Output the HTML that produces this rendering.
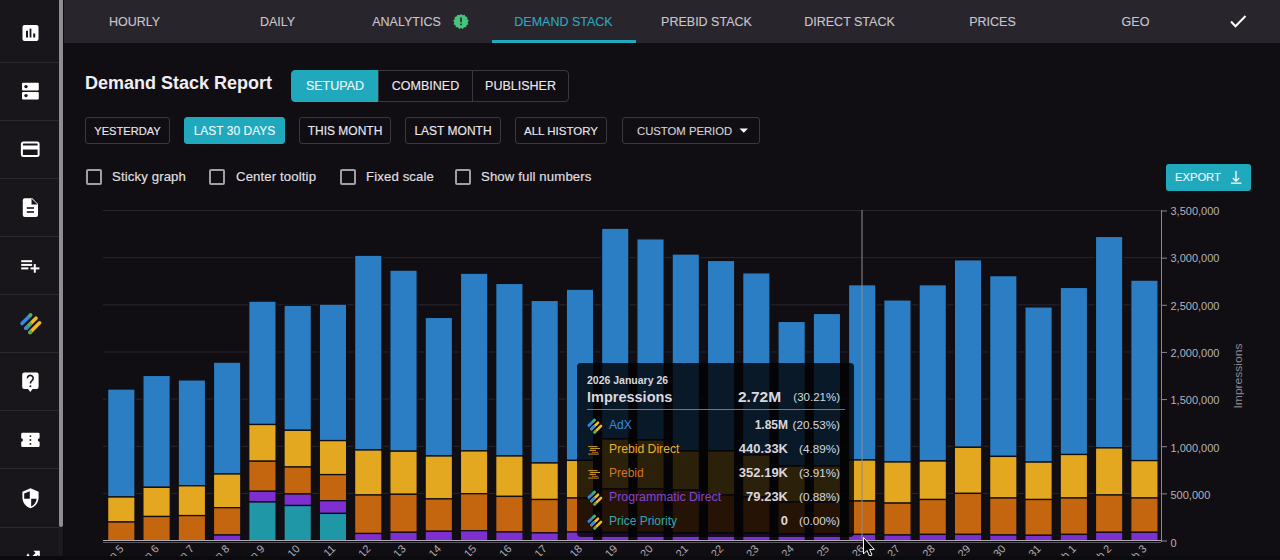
<!DOCTYPE html>
<html><head><meta charset="utf-8">
<style>
*{box-sizing:border-box;margin:0;padding:0}
html,body{width:1280px;height:560px;overflow:hidden;background:#100e13;font-family:"Liberation Sans",sans-serif;color:#e9e6ec}
.abs{position:absolute}
.tab,.grp,.btn,.cbl,#export{-webkit-text-stroke:0.12px currentColor}
#side{left:0;top:0;width:59px;height:560px;background:#19161b}
.sep{position:absolute;left:0;width:59px;height:1px;background:#2b2830}
#sbtrack{left:59px;top:0;width:4px;height:560px;background:#1c1a1f}
#sbthumb{left:59px;top:0;width:4px;height:527px;background:#8f8c93;border-radius:0 0 2px 2px}
#nav{left:64px;top:0;width:1216px;height:43px;background:#29252c}
.tab{position:absolute;top:1px;height:43px;width:143px;text-align:center;font-size:12.5px;line-height:43px;color:#c9c5cc;white-space:nowrap}
.tab.act{color:#2aa8c0}
#uline{left:492px;top:40px;width:144px;height:3px;background:#22a9bd}
#title{left:85px;top:72px;font-size:18px;font-weight:700;color:#f1eef3;white-space:nowrap;line-height:22px}
.grp{position:absolute;top:70px;height:32px;border:1px solid #3a3740;font-size:12.5px;color:#ece9ef;line-height:30px;text-align:center;white-space:nowrap}
.btn{position:absolute;top:117px;height:27px;border:1px solid #3a3740;border-radius:3px;font-size:12px;color:#ece9ef;line-height:26px;text-align:center;white-space:nowrap}
.btn.on{background:#20a9bd;border-color:#20a9bd;color:#eef8fa}
.cb{position:absolute;top:169px;width:16px;height:16px;border:2px solid #a29ea6;border-radius:2px}
.cbl{position:absolute;top:169px;font-size:13.2px;letter-spacing:0.12px;line-height:16px;color:#e3e0e6;white-space:nowrap}
#export{left:1166px;top:164px;width:85px;height:27px;background:#20a9bd;border-radius:3px;font-size:11.2px;color:#eef8fa;line-height:27px;padding-left:9px;white-space:nowrap}
svg{position:absolute;left:0;top:0}
#tip{left:577px;top:363px;width:277px;height:174px;background:rgba(3,3,5,0.82);border-radius:4px}
.tt{position:absolute;white-space:nowrap;color:#dad7dd}
</style></head><body>
<div id="side" class="abs">
  <div class="sep" style="top:62px"></div>
  <div class="sep" style="top:120px"></div>
  <div class="sep" style="top:178px"></div>
  <div class="sep" style="top:236px"></div>
  <div class="sep" style="top:294px"></div>
  <div class="sep" style="top:352px"></div>
  <div class="sep" style="top:410px"></div>
  <div class="sep" style="top:468px"></div>
  <div class="sep" style="top:527px"></div>
</div>
<div id="sbtrack" class="abs"></div>
<div id="sbthumb" class="abs"></div>
<div class="abs" style="left:63px;top:0;width:1px;height:560px;background:#0d0b0f"></div>

<svg width="64" height="560" viewBox="0 0 64 560">
  <!-- icon1 chart -->
  <rect x="22.5" y="25" width="16" height="16" rx="2" fill="#fff"/>
  <rect x="26" y="30.8" width="2" height="6.7" fill="#19161b"/>
  <rect x="29.6" y="28.6" width="1.8" height="8.9" fill="#19161b"/>
  <rect x="33.2" y="33.5" width="2" height="4" fill="#19161b"/>
  <!-- icon2 storage -->
  <rect x="22" y="82.8" width="16.8" height="7.7" rx="1" fill="#fff"/>
  <rect x="22" y="91.9" width="16.8" height="7.5" rx="1" fill="#fff"/>
  <circle cx="26" cy="86.6" r="1.7" fill="#19161b"/>
  <circle cx="26" cy="95.6" r="1.7" fill="#19161b"/>
  <!-- icon3 card -->
  <rect x="21.9" y="142.5" width="16.7" height="13.5" rx="1.5" fill="none" stroke="#fff" stroke-width="2"/>
  <rect x="21.9" y="145.5" width="16.7" height="4" fill="#fff"/>
  <!-- icon4 doc -->
  <path d="M24.8 198.2 H32.3 L38 203.9 V215 a1.9 1.9 0 0 1 -1.9 1.9 H24.8 a2 2 0 0 1 -2 -2 V200.2 a2 2 0 0 1 2 -2z" fill="#fff"/>
  <path d="M31.5 198.5 V204.5 H37.6" fill="#19161b"/>
  <rect x="26.8" y="207.2" width="7.2" height="1.6" fill="#19161b"/>
  <rect x="26.8" y="211.2" width="7.2" height="1.6" fill="#19161b"/>
  <!-- icon5 playlist add -->
  <rect x="21.2" y="260.2" width="10.9" height="2" fill="#fff"/>
  <rect x="21.2" y="263.9" width="10.9" height="2" fill="#fff"/>
  <rect x="21.2" y="267.4" width="7.2" height="2" fill="#fff"/>
  <rect x="30.5" y="267.4" width="8.9" height="2" fill="#fff"/>
  <rect x="33.8" y="264.1" width="2" height="8.6" fill="#fff"/>
  <!-- icon6 logo -->
  <g stroke-linecap="round" stroke-width="3.6" fill="none">
    <line x1="22" y1="323.6" x2="30.6" y2="315" stroke="#3b86e0"/>
    <line x1="30" y1="315.6" x2="30.6" y2="315" stroke="#3fb555"/>
    <line x1="26" y1="328.2" x2="36" y2="318.2" stroke="#f6b81e"/>
    <line x1="26" y1="328.2" x2="29" y2="325.2" stroke="#3b86e0"/>
    <line x1="29.2" y1="325" x2="30.2" y2="324" stroke="#3fb555"/>
    <line x1="30" y1="332.4" x2="39.6" y2="322.8" stroke="#f6b81e"/>
    <line x1="30" y1="332.4" x2="30.6" y2="331.8" stroke="#3fb555"/>
  </g>
  <!-- icon7 help bubble -->
  <path d="M24.2 372.6 H36.6 a2 2 0 0 1 2 2 V387 a2 2 0 0 1 -2 2 H32.6 L30.3 391.9 L28 389 H24.2 a2 2 0 0 1 -2 -2 V374.6 a2 2 0 0 1 2 -2z" fill="#fff"/>
  <path d="M27.4 378.2 a2.9 2.9 0 1 1 4.6 2.4 c-1.2 0.9 -1.6 1.5 -1.6 2.9" fill="none" stroke="#19161b" stroke-width="1.6"/>
  <circle cx="30.4" cy="386.3" r="1" fill="#19161b"/>
  <!-- icon8 ticket -->
  <path d="M22.5 432.8 H38.3 a1.3 1.3 0 0 1 1.3 1.3 V438.2 a1.8 1.8 0 0 0 0 3.6 V445.7 a1.3 1.3 0 0 1 -1.3 1.3 H22.5 a1.3 1.3 0 0 1 -1.3 -1.3 V441.8 a1.8 1.8 0 0 0 0 -3.6 V434.1 a1.3 1.3 0 0 1 1.3 -1.3z" fill="#fff"/>
  <circle cx="30.4" cy="436.1" r="0.95" fill="#19161b"/>
  <circle cx="30.4" cy="440" r="0.95" fill="#19161b"/>
  <circle cx="30.4" cy="443.9" r="0.95" fill="#19161b"/>
  <!-- icon9 shield -->
  <path d="M30.5 488.3 L38.6 491.8 V497.5 c0 5 -3.4 9.5 -8.1 10.7 c-4.7 -1.2 -8.1 -5.7 -8.1 -10.7 V491.8z" fill="#fff"/>
  <path d="M29.8 491.2 V498.8 H24.2 V493.4z" fill="#19161b"/>
  <path d="M31.2 498.8 H36.7 c-0.5 3.6 -2.5 6.5 -5.5 7.6z" fill="#19161b"/>
  <!-- expand icon partial -->
  <path d="M33.4 550.7 H39.8 V557.1 L37.7 555 L34.6 558.1 L32.5 556 L35.6 552.9z" fill="#fff"/>
  <path d="M25.6 557.2 L28 553.2 L30.4 557.2z" fill="#fff"/>
</svg>

<div id="nav" class="abs"></div>
<div class="tab" style="left:63px">HOURLY</div>
<div class="tab" style="left:206px">DAILY</div>
<div class="tab" style="left:349px;padding-right:28px;padding-left:0px">ANALYTICS</div>
<div class="tab act" style="left:492px">DEMAND STACK</div>
<div class="tab" style="left:635px">PREBID STACK</div>
<div class="tab" style="left:778px">DIRECT STACK</div>
<div class="tab" style="left:921px">PRICES</div>
<div class="tab" style="left:1064px">GEO</div>
<div id="uline" class="abs"></div>
<svg width="1280" height="43" viewBox="0 0 1280 43" style="left:0;top:0">
  <path d="M461 14 l1.6 1.3 2-0.6 0.8 1.9 2 0.5 -0.2 2.1 1.6 1.3 -1.1 1.8 0.7 2 -1.9 0.9 -0.3 2.1 -2.1 0 -1.2 1.7 -1.9 -1 -1.9 1 -1.2 -1.7 -2.1 0 -0.3 -2.1 -1.9 -0.9 0.7 -2 -1.1 -1.8 1.6 -1.3 -0.2 -2.1 2 -0.5 0.8 -1.9 2 0.6z" fill="#46c37d"/>
  <rect x="460.2" y="17.5" width="1.6" height="4.8" fill="#29252c"/>
  <rect x="460.2" y="23.6" width="1.6" height="1.6" fill="#29252c"/>
  <path d="M1231 21.5 L1235.5 26.3 L1245.5 16" stroke="#fff" stroke-width="2" fill="none"/>
</svg>

<div id="title" class="abs">Demand Stack Report</div>
<div class="grp" style="left:291px;width:88px;border-radius:4px 0 0 4px;background:#20a9bd;border-color:#20a9bd;color:#eef8fa">SETUPAD</div>
<div class="grp" style="left:378px;width:95px;border-left:1px solid #3a3740">COMBINED</div>
<div class="grp" style="left:472px;width:97px;border-radius:0 4px 4px 0">PUBLISHER</div>

<div class="btn" style="left:85px;width:85px;font-size:11.1px">YESTERDAY</div>
<div class="btn on" style="left:184px;width:101px">LAST 30 DAYS</div>
<div class="btn" style="left:299px;width:92px">THIS MONTH</div>
<div class="btn" style="left:405px;width:96px">LAST MONTH</div>
<div class="btn" style="left:515px;width:92px;font-size:11.5px">ALL HISTORY</div>
<div class="btn" style="left:622px;width:138px;text-align:left;padding-left:14px;color:#d6d3d9;font-size:11.3px">CUSTOM PERIOD</div>
<svg width="1280" height="160" style="left:0;top:0"><path d="M739.5 128.5 H748 L743.75 132.8z" fill="#fff"/></svg>

<div class="cb" style="left:86px"></div><div class="cbl" style="left:112px">Sticky graph</div>
<div class="cb" style="left:209px"></div><div class="cbl" style="left:236px">Center tooltip</div>
<div class="cb" style="left:340px"></div><div class="cbl" style="left:366px">Fixed scale</div>
<div class="cb" style="left:455px"></div><div class="cbl" style="left:481px">Show full numbers</div>
<div id="export" class="abs">EXPORT</div>
<svg width="1280" height="200" style="left:0;top:0">
  <path d="M1236 171 V181 M1232.8 178 L1236 181.2 L1239.2 178 M1231 183.2 H1241.4" stroke="#fff" stroke-width="1.3" fill="none"/>
</svg>

<svg width="1280" height="560" viewBox="0 0 1280 560" style="left:0;top:0">
<rect x="103" y="540.10" width="1058" height="1" fill="#29262e"/>
<rect x="103" y="492.94" width="1058" height="1" fill="#29262e"/>
<rect x="103" y="445.79" width="1058" height="1" fill="#29262e"/>
<rect x="103" y="398.63" width="1058" height="1" fill="#29262e"/>
<rect x="103" y="351.47" width="1058" height="1" fill="#29262e"/>
<rect x="103" y="304.32" width="1058" height="1" fill="#29262e"/>
<rect x="103" y="257.16" width="1058" height="1" fill="#29262e"/>
<rect x="103" y="210.00" width="1058" height="1" fill="#29262e"/>
<rect x="107.60" y="389.00" width="27.4" height="108.00" fill="#2b7ec3" stroke="#100e13" stroke-width="1.3"/>
<rect x="107.60" y="497.00" width="27.4" height="25.00" fill="#e3a81f" stroke="#100e13" stroke-width="1.3"/>
<rect x="107.60" y="522.00" width="27.4" height="19.00" fill="#c4650f" stroke="#100e13" stroke-width="1.3"/>
<rect x="142.88" y="375.40" width="27.4" height="111.90" fill="#2b7ec3" stroke="#100e13" stroke-width="1.3"/>
<rect x="142.88" y="487.30" width="27.4" height="29.20" fill="#e3a81f" stroke="#100e13" stroke-width="1.3"/>
<rect x="142.88" y="516.50" width="27.4" height="24.50" fill="#c4650f" stroke="#100e13" stroke-width="1.3"/>
<rect x="178.16" y="379.90" width="27.4" height="105.90" fill="#2b7ec3" stroke="#100e13" stroke-width="1.3"/>
<rect x="178.16" y="485.80" width="27.4" height="29.80" fill="#e3a81f" stroke="#100e13" stroke-width="1.3"/>
<rect x="178.16" y="515.60" width="27.4" height="25.40" fill="#c4650f" stroke="#100e13" stroke-width="1.3"/>
<rect x="213.44" y="362.10" width="27.4" height="111.90" fill="#2b7ec3" stroke="#100e13" stroke-width="1.3"/>
<rect x="213.44" y="474.00" width="27.4" height="33.70" fill="#e3a81f" stroke="#100e13" stroke-width="1.3"/>
<rect x="213.44" y="507.70" width="27.4" height="27.30" fill="#c4650f" stroke="#100e13" stroke-width="1.3"/>
<rect x="213.44" y="535.00" width="27.4" height="6.00" fill="#7d2fcf" stroke="#100e13" stroke-width="1.3"/>
<rect x="248.72" y="301.10" width="27.4" height="123.40" fill="#2b7ec3" stroke="#100e13" stroke-width="1.3"/>
<rect x="248.72" y="424.50" width="27.4" height="36.70" fill="#e3a81f" stroke="#100e13" stroke-width="1.3"/>
<rect x="248.72" y="461.20" width="27.4" height="30.10" fill="#c4650f" stroke="#100e13" stroke-width="1.3"/>
<rect x="248.72" y="491.30" width="27.4" height="10.70" fill="#7d2fcf" stroke="#100e13" stroke-width="1.3"/>
<rect x="248.72" y="502.00" width="27.4" height="39.00" fill="#2097a7" stroke="#100e13" stroke-width="1.3"/>
<rect x="284.00" y="305.30" width="27.4" height="125.00" fill="#2b7ec3" stroke="#100e13" stroke-width="1.3"/>
<rect x="284.00" y="430.30" width="27.4" height="36.70" fill="#e3a81f" stroke="#100e13" stroke-width="1.3"/>
<rect x="284.00" y="467.00" width="27.4" height="27.00" fill="#c4650f" stroke="#100e13" stroke-width="1.3"/>
<rect x="284.00" y="494.00" width="27.4" height="11.50" fill="#7d2fcf" stroke="#100e13" stroke-width="1.3"/>
<rect x="284.00" y="505.50" width="27.4" height="35.50" fill="#2097a7" stroke="#100e13" stroke-width="1.3"/>
<rect x="319.28" y="304.10" width="27.4" height="136.50" fill="#2b7ec3" stroke="#100e13" stroke-width="1.3"/>
<rect x="319.28" y="440.60" width="27.4" height="34.00" fill="#e3a81f" stroke="#100e13" stroke-width="1.3"/>
<rect x="319.28" y="474.60" width="27.4" height="26.10" fill="#c4650f" stroke="#100e13" stroke-width="1.3"/>
<rect x="319.28" y="500.70" width="27.4" height="12.70" fill="#7d2fcf" stroke="#100e13" stroke-width="1.3"/>
<rect x="319.28" y="513.40" width="27.4" height="27.60" fill="#2097a7" stroke="#100e13" stroke-width="1.3"/>
<rect x="354.56" y="255.20" width="27.4" height="194.80" fill="#2b7ec3" stroke="#100e13" stroke-width="1.3"/>
<rect x="354.56" y="450.00" width="27.4" height="45.00" fill="#e3a81f" stroke="#100e13" stroke-width="1.3"/>
<rect x="354.56" y="495.00" width="27.4" height="38.50" fill="#c4650f" stroke="#100e13" stroke-width="1.3"/>
<rect x="354.56" y="533.50" width="27.4" height="7.50" fill="#7d2fcf" stroke="#100e13" stroke-width="1.3"/>
<rect x="389.84" y="270.10" width="27.4" height="181.10" fill="#2b7ec3" stroke="#100e13" stroke-width="1.3"/>
<rect x="389.84" y="451.20" width="27.4" height="43.10" fill="#e3a81f" stroke="#100e13" stroke-width="1.3"/>
<rect x="389.84" y="494.30" width="27.4" height="38.00" fill="#c4650f" stroke="#100e13" stroke-width="1.3"/>
<rect x="389.84" y="532.30" width="27.4" height="8.70" fill="#7d2fcf" stroke="#100e13" stroke-width="1.3"/>
<rect x="425.12" y="317.40" width="27.4" height="138.60" fill="#2b7ec3" stroke="#100e13" stroke-width="1.3"/>
<rect x="425.12" y="456.00" width="27.4" height="42.90" fill="#e3a81f" stroke="#100e13" stroke-width="1.3"/>
<rect x="425.12" y="498.90" width="27.4" height="32.40" fill="#c4650f" stroke="#100e13" stroke-width="1.3"/>
<rect x="425.12" y="531.30" width="27.4" height="9.70" fill="#7d2fcf" stroke="#100e13" stroke-width="1.3"/>
<rect x="460.40" y="273.20" width="27.4" height="177.70" fill="#2b7ec3" stroke="#100e13" stroke-width="1.3"/>
<rect x="460.40" y="450.90" width="27.4" height="42.80" fill="#e3a81f" stroke="#100e13" stroke-width="1.3"/>
<rect x="460.40" y="493.70" width="27.4" height="37.00" fill="#c4650f" stroke="#100e13" stroke-width="1.3"/>
<rect x="460.40" y="530.70" width="27.4" height="10.30" fill="#7d2fcf" stroke="#100e13" stroke-width="1.3"/>
<rect x="495.68" y="283.40" width="27.4" height="172.60" fill="#2b7ec3" stroke="#100e13" stroke-width="1.3"/>
<rect x="495.68" y="456.00" width="27.4" height="40.40" fill="#e3a81f" stroke="#100e13" stroke-width="1.3"/>
<rect x="495.68" y="496.40" width="27.4" height="35.60" fill="#c4650f" stroke="#100e13" stroke-width="1.3"/>
<rect x="495.68" y="532.00" width="27.4" height="9.00" fill="#7d2fcf" stroke="#100e13" stroke-width="1.3"/>
<rect x="530.96" y="300.40" width="27.4" height="162.60" fill="#2b7ec3" stroke="#100e13" stroke-width="1.3"/>
<rect x="530.96" y="463.00" width="27.4" height="36.50" fill="#e3a81f" stroke="#100e13" stroke-width="1.3"/>
<rect x="530.96" y="499.50" width="27.4" height="33.40" fill="#c4650f" stroke="#100e13" stroke-width="1.3"/>
<rect x="530.96" y="532.90" width="27.4" height="8.10" fill="#7d2fcf" stroke="#100e13" stroke-width="1.3"/>
<rect x="566.24" y="289.20" width="27.4" height="171.20" fill="#2b7ec3" stroke="#100e13" stroke-width="1.3"/>
<rect x="566.24" y="460.40" width="27.4" height="37.60" fill="#e3a81f" stroke="#100e13" stroke-width="1.3"/>
<rect x="566.24" y="498.00" width="27.4" height="34.00" fill="#c4650f" stroke="#100e13" stroke-width="1.3"/>
<rect x="566.24" y="532.00" width="27.4" height="9.00" fill="#7d2fcf" stroke="#100e13" stroke-width="1.3"/>
<rect x="601.52" y="228.20" width="27.4" height="210.80" fill="#2b7ec3" stroke="#100e13" stroke-width="1.3"/>
<rect x="601.52" y="439.00" width="27.4" height="50.00" fill="#e3a81f" stroke="#100e13" stroke-width="1.3"/>
<rect x="601.52" y="489.00" width="27.4" height="43.50" fill="#c4650f" stroke="#100e13" stroke-width="1.3"/>
<rect x="601.52" y="532.50" width="27.4" height="8.50" fill="#7d2fcf" stroke="#100e13" stroke-width="1.3"/>
<rect x="636.80" y="238.80" width="27.4" height="201.20" fill="#2b7ec3" stroke="#100e13" stroke-width="1.3"/>
<rect x="636.80" y="440.00" width="27.4" height="49.00" fill="#e3a81f" stroke="#100e13" stroke-width="1.3"/>
<rect x="636.80" y="489.00" width="27.4" height="43.50" fill="#c4650f" stroke="#100e13" stroke-width="1.3"/>
<rect x="636.80" y="532.50" width="27.4" height="8.50" fill="#7d2fcf" stroke="#100e13" stroke-width="1.3"/>
<rect x="672.08" y="254.00" width="27.4" height="197.00" fill="#2b7ec3" stroke="#100e13" stroke-width="1.3"/>
<rect x="672.08" y="451.00" width="27.4" height="39.00" fill="#e3a81f" stroke="#100e13" stroke-width="1.3"/>
<rect x="672.08" y="490.00" width="27.4" height="43.00" fill="#c4650f" stroke="#100e13" stroke-width="1.3"/>
<rect x="672.08" y="533.00" width="27.4" height="8.00" fill="#7d2fcf" stroke="#100e13" stroke-width="1.3"/>
<rect x="707.36" y="260.40" width="27.4" height="190.60" fill="#2b7ec3" stroke="#100e13" stroke-width="1.3"/>
<rect x="707.36" y="451.00" width="27.4" height="44.00" fill="#e3a81f" stroke="#100e13" stroke-width="1.3"/>
<rect x="707.36" y="495.00" width="27.4" height="38.00" fill="#c4650f" stroke="#100e13" stroke-width="1.3"/>
<rect x="707.36" y="533.00" width="27.4" height="8.00" fill="#7d2fcf" stroke="#100e13" stroke-width="1.3"/>
<rect x="742.64" y="272.80" width="27.4" height="182.20" fill="#2b7ec3" stroke="#100e13" stroke-width="1.3"/>
<rect x="742.64" y="455.00" width="27.4" height="42.00" fill="#e3a81f" stroke="#100e13" stroke-width="1.3"/>
<rect x="742.64" y="497.00" width="27.4" height="36.00" fill="#c4650f" stroke="#100e13" stroke-width="1.3"/>
<rect x="742.64" y="533.00" width="27.4" height="8.00" fill="#7d2fcf" stroke="#100e13" stroke-width="1.3"/>
<rect x="777.92" y="321.40" width="27.4" height="144.60" fill="#2b7ec3" stroke="#100e13" stroke-width="1.3"/>
<rect x="777.92" y="466.00" width="27.4" height="36.00" fill="#e3a81f" stroke="#100e13" stroke-width="1.3"/>
<rect x="777.92" y="502.00" width="27.4" height="32.00" fill="#c4650f" stroke="#100e13" stroke-width="1.3"/>
<rect x="777.92" y="534.00" width="27.4" height="7.00" fill="#7d2fcf" stroke="#100e13" stroke-width="1.3"/>
<rect x="813.20" y="313.40" width="27.4" height="152.60" fill="#2b7ec3" stroke="#100e13" stroke-width="1.3"/>
<rect x="813.20" y="466.00" width="27.4" height="36.00" fill="#e3a81f" stroke="#100e13" stroke-width="1.3"/>
<rect x="813.20" y="502.00" width="27.4" height="32.00" fill="#c4650f" stroke="#100e13" stroke-width="1.3"/>
<rect x="813.20" y="534.00" width="27.4" height="7.00" fill="#7d2fcf" stroke="#100e13" stroke-width="1.3"/>
<rect x="848.48" y="284.70" width="27.4" height="175.30" fill="#2b7ec3" stroke="#100e13" stroke-width="1.3"/>
<rect x="848.48" y="460.00" width="27.4" height="41.00" fill="#e3a81f" stroke="#100e13" stroke-width="1.3"/>
<rect x="848.48" y="501.00" width="27.4" height="33.40" fill="#c4650f" stroke="#100e13" stroke-width="1.3"/>
<rect x="848.48" y="534.40" width="27.4" height="6.60" fill="#7d2fcf" stroke="#100e13" stroke-width="1.3"/>
<rect x="883.76" y="299.90" width="27.4" height="162.10" fill="#2b7ec3" stroke="#100e13" stroke-width="1.3"/>
<rect x="883.76" y="462.00" width="27.4" height="41.10" fill="#e3a81f" stroke="#100e13" stroke-width="1.3"/>
<rect x="883.76" y="503.10" width="27.4" height="31.90" fill="#c4650f" stroke="#100e13" stroke-width="1.3"/>
<rect x="883.76" y="535.00" width="27.4" height="6.00" fill="#7d2fcf" stroke="#100e13" stroke-width="1.3"/>
<rect x="919.04" y="284.70" width="27.4" height="176.30" fill="#2b7ec3" stroke="#100e13" stroke-width="1.3"/>
<rect x="919.04" y="461.00" width="27.4" height="38.50" fill="#e3a81f" stroke="#100e13" stroke-width="1.3"/>
<rect x="919.04" y="499.50" width="27.4" height="34.90" fill="#c4650f" stroke="#100e13" stroke-width="1.3"/>
<rect x="919.04" y="534.40" width="27.4" height="6.60" fill="#7d2fcf" stroke="#100e13" stroke-width="1.3"/>
<rect x="954.32" y="259.80" width="27.4" height="187.50" fill="#2b7ec3" stroke="#100e13" stroke-width="1.3"/>
<rect x="954.32" y="447.30" width="27.4" height="46.10" fill="#e3a81f" stroke="#100e13" stroke-width="1.3"/>
<rect x="954.32" y="493.40" width="27.4" height="41.00" fill="#c4650f" stroke="#100e13" stroke-width="1.3"/>
<rect x="954.32" y="534.40" width="27.4" height="6.60" fill="#7d2fcf" stroke="#100e13" stroke-width="1.3"/>
<rect x="989.60" y="275.60" width="27.4" height="180.80" fill="#2b7ec3" stroke="#100e13" stroke-width="1.3"/>
<rect x="989.60" y="456.40" width="27.4" height="41.60" fill="#e3a81f" stroke="#100e13" stroke-width="1.3"/>
<rect x="989.60" y="498.00" width="27.4" height="37.00" fill="#c4650f" stroke="#100e13" stroke-width="1.3"/>
<rect x="989.60" y="535.00" width="27.4" height="6.00" fill="#7d2fcf" stroke="#100e13" stroke-width="1.3"/>
<rect x="1024.88" y="306.90" width="27.4" height="155.20" fill="#2b7ec3" stroke="#100e13" stroke-width="1.3"/>
<rect x="1024.88" y="462.10" width="27.4" height="37.40" fill="#e3a81f" stroke="#100e13" stroke-width="1.3"/>
<rect x="1024.88" y="499.50" width="27.4" height="35.80" fill="#c4650f" stroke="#100e13" stroke-width="1.3"/>
<rect x="1024.88" y="535.30" width="27.4" height="5.70" fill="#7d2fcf" stroke="#100e13" stroke-width="1.3"/>
<rect x="1060.16" y="287.40" width="27.4" height="167.10" fill="#2b7ec3" stroke="#100e13" stroke-width="1.3"/>
<rect x="1060.16" y="454.50" width="27.4" height="43.50" fill="#e3a81f" stroke="#100e13" stroke-width="1.3"/>
<rect x="1060.16" y="498.00" width="27.4" height="36.40" fill="#c4650f" stroke="#100e13" stroke-width="1.3"/>
<rect x="1060.16" y="534.40" width="27.4" height="6.60" fill="#7d2fcf" stroke="#100e13" stroke-width="1.3"/>
<rect x="1095.44" y="236.40" width="27.4" height="211.50" fill="#2b7ec3" stroke="#100e13" stroke-width="1.3"/>
<rect x="1095.44" y="447.90" width="27.4" height="47.10" fill="#e3a81f" stroke="#100e13" stroke-width="1.3"/>
<rect x="1095.44" y="495.00" width="27.4" height="37.30" fill="#c4650f" stroke="#100e13" stroke-width="1.3"/>
<rect x="1095.44" y="532.30" width="27.4" height="8.70" fill="#7d2fcf" stroke="#100e13" stroke-width="1.3"/>
<rect x="1130.72" y="280.10" width="27.4" height="180.50" fill="#2b7ec3" stroke="#100e13" stroke-width="1.3"/>
<rect x="1130.72" y="460.60" width="27.4" height="37.40" fill="#e3a81f" stroke="#100e13" stroke-width="1.3"/>
<rect x="1130.72" y="498.00" width="27.4" height="34.30" fill="#c4650f" stroke="#100e13" stroke-width="1.3"/>
<rect x="1130.72" y="532.30" width="27.4" height="8.70" fill="#7d2fcf" stroke="#100e13" stroke-width="1.3"/>
<rect x="103" y="540" width="1058" height="1" fill="#aeabb2"/>
<rect x="103" y="542" width="1058" height="1" fill="#56535a"/>
<rect x="1161" y="210" width="1" height="332" fill="#8a878e"/>
<g font-family="Liberation Sans" font-size="11" fill="#b5b2b9">
<rect x="1161" y="540.50" width="6" height="1" fill="#8a878e"/>
<text x="1170.5" y="546.53">0</text>
<rect x="1161" y="493.36" width="6" height="1" fill="#8a878e"/>
<text x="1170.5" y="499.14">500,000</text>
<rect x="1161" y="446.21" width="6" height="1" fill="#8a878e"/>
<text x="1170.5" y="451.75">1,000,000</text>
<rect x="1161" y="399.07" width="6" height="1" fill="#8a878e"/>
<text x="1170.5" y="404.36">1,500,000</text>
<rect x="1161" y="351.93" width="6" height="1" fill="#8a878e"/>
<text x="1170.5" y="356.97">2,000,000</text>
<rect x="1161" y="304.78" width="6" height="1" fill="#8a878e"/>
<text x="1170.5" y="309.58">2,500,000</text>
<rect x="1161" y="257.64" width="6" height="1" fill="#8a878e"/>
<text x="1170.5" y="262.19">3,000,000</text>
<rect x="1161" y="210.50" width="6" height="1" fill="#8a878e"/>
<text x="1170.5" y="214.80">3,500,000</text>
</g>
<g font-family="Liberation Sans" font-size="11" fill="#b0adb4">
<text x="124.3" y="549.5" transform="rotate(-45 124.3 549.5)" text-anchor="end">Jan 5</text>
<text x="159.6" y="549.5" transform="rotate(-45 159.6 549.5)" text-anchor="end">Jan 6</text>
<text x="194.9" y="549.5" transform="rotate(-45 194.9 549.5)" text-anchor="end">Jan 7</text>
<text x="230.1" y="549.5" transform="rotate(-45 230.1 549.5)" text-anchor="end">Jan 8</text>
<text x="265.4" y="549.5" transform="rotate(-45 265.4 549.5)" text-anchor="end">Jan 9</text>
<text x="300.7" y="549.5" transform="rotate(-45 300.7 549.5)" text-anchor="end">Jan 10</text>
<text x="336.0" y="549.5" transform="rotate(-45 336.0 549.5)" text-anchor="end">Jan 11</text>
<text x="371.3" y="549.5" transform="rotate(-45 371.3 549.5)" text-anchor="end">Jan 12</text>
<text x="406.5" y="549.5" transform="rotate(-45 406.5 549.5)" text-anchor="end">Jan 13</text>
<text x="441.8" y="549.5" transform="rotate(-45 441.8 549.5)" text-anchor="end">Jan 14</text>
<text x="477.1" y="549.5" transform="rotate(-45 477.1 549.5)" text-anchor="end">Jan 15</text>
<text x="512.4" y="549.5" transform="rotate(-45 512.4 549.5)" text-anchor="end">Jan 16</text>
<text x="547.7" y="549.5" transform="rotate(-45 547.7 549.5)" text-anchor="end">Jan 17</text>
<text x="582.9" y="549.5" transform="rotate(-45 582.9 549.5)" text-anchor="end">Jan 18</text>
<text x="618.2" y="549.5" transform="rotate(-45 618.2 549.5)" text-anchor="end">Jan 19</text>
<text x="653.5" y="549.5" transform="rotate(-45 653.5 549.5)" text-anchor="end">Jan 20</text>
<text x="688.8" y="549.5" transform="rotate(-45 688.8 549.5)" text-anchor="end">Jan 21</text>
<text x="724.1" y="549.5" transform="rotate(-45 724.1 549.5)" text-anchor="end">Jan 22</text>
<text x="759.3" y="549.5" transform="rotate(-45 759.3 549.5)" text-anchor="end">Jan 23</text>
<text x="794.6" y="549.5" transform="rotate(-45 794.6 549.5)" text-anchor="end">Jan 24</text>
<text x="829.9" y="549.5" transform="rotate(-45 829.9 549.5)" text-anchor="end">Jan 25</text>
<text x="865.2" y="549.5" transform="rotate(-45 865.2 549.5)" text-anchor="end">Jan 26</text>
<text x="900.5" y="549.5" transform="rotate(-45 900.5 549.5)" text-anchor="end">Jan 27</text>
<text x="935.7" y="549.5" transform="rotate(-45 935.7 549.5)" text-anchor="end">Jan 28</text>
<text x="971.0" y="549.5" transform="rotate(-45 971.0 549.5)" text-anchor="end">Jan 29</text>
<text x="1006.3" y="549.5" transform="rotate(-45 1006.3 549.5)" text-anchor="end">Jan 30</text>
<text x="1041.6" y="549.5" transform="rotate(-45 1041.6 549.5)" text-anchor="end">Jan 31</text>
<text x="1076.9" y="549.5" transform="rotate(-45 1076.9 549.5)" text-anchor="end">Feb 1</text>
<text x="1112.1" y="549.5" transform="rotate(-45 1112.1 549.5)" text-anchor="end">Feb 2</text>
<text x="1147.4" y="549.5" transform="rotate(-45 1147.4 549.5)" text-anchor="end">Feb 3</text>
</g>
<text x="0" y="0" transform="translate(1241.6 376) rotate(-90)" text-anchor="middle" font-family="Liberation Sans" font-size="10.5" textLength="65" lengthAdjust="spacingAndGlyphs" fill="#8c8991">Impressions</text>
<rect x="861.5" y="210" width="1" height="331" fill="#8d8a92"/>
</svg>

<div id="tip" class="abs"></div>
<div class="tt" style="left:587px;top:374px;font-size:10.5px;font-weight:700;line-height:12px">2026 January 26</div>
<div class="tt" style="left:587px;top:389px;font-size:14.5px;font-weight:700;line-height:17px">Impressions</div>
<div class="tt" style="left:738px;top:388px;font-size:15.5px;font-weight:700;line-height:17px">2.72M</div>
<div class="tt" style="right:440px;top:390px;font-size:11.5px;line-height:14px">(30.21%)</div>
<div class="abs" style="left:587px;top:409px;width:258px;height:1px;background:#77747b"></div>

<div class="tt" style="left:609px;top:418px;font-size:12px;line-height:14px;color:#3a8ad8">AdX</div>
<div class="tt" style="left:609px;top:442px;font-size:12px;line-height:14px;color:#e9b02e;font-size:12.2px">Prebid Direct</div>
<div class="tt" style="left:609px;top:466px;font-size:12px;line-height:14px;color:#d27523">Prebid</div>
<div class="tt" style="left:609px;top:490px;font-size:12px;line-height:14px;color:#8644d6;font-size:12.3px">Programmatic Direct</div>
<div class="tt" style="left:609px;top:514px;font-size:12px;line-height:14px;color:#35a6b6">Price Priority</div>

<div class="tt" style="right:492px;top:418px;font-size:12px;font-weight:700;line-height:14px">1.85M</div>
<div class="tt" style="right:492px;top:442px;font-size:13px;font-weight:700;line-height:14px">440.33K</div>
<div class="tt" style="right:492px;top:466px;font-size:13px;font-weight:700;line-height:14px">352.19K</div>
<div class="tt" style="right:492px;top:490px;font-size:13px;font-weight:700;line-height:14px">79.23K</div>
<div class="tt" style="right:492px;top:514px;font-size:13px;font-weight:700;line-height:14px">0</div>

<div class="tt" style="right:440px;top:418px;font-size:11.7px;line-height:14px">(20.53%)</div>
<div class="tt" style="right:440px;top:442px;font-size:11.7px;line-height:14px">(4.89%)</div>
<div class="tt" style="right:440px;top:466px;font-size:11.7px;line-height:14px">(3.91%)</div>
<div class="tt" style="right:440px;top:490px;font-size:11.7px;line-height:14px">(0.88%)</div>
<div class="tt" style="right:440px;top:514px;font-size:11.7px;line-height:14px">(0.00%)</div>

<svg width="1280" height="560" viewBox="0 0 1280 560" style="left:0;top:0">
  <g stroke-linecap="round" stroke-width="2.6" fill="none">
    <g id="lg">
    <line x1="588.8" y1="425.5" x2="594.5" y2="420" stroke="#3b86e0"/>
    <line x1="593.3" y1="421.3" x2="594.5" y2="420" stroke="#3fb555"/>
    <line x1="591.5" y1="429" x2="598" y2="422.7" stroke="#f6b81e"/>
    <line x1="591.5" y1="429" x2="594" y2="426.5" stroke="#3b86e0"/>
    <line x1="594.6" y1="432.3" x2="601" y2="426" stroke="#f6b81e"/>
    <line x1="594.6" y1="432.3" x2="595.5" y2="431.4" stroke="#3fb555"/>
    </g>
    <use href="#lg" y="72"/>
    <use href="#lg" y="96"/>
  </g>
  <g id="pb" stroke-width="1.1" opacity="0.9">
    <line x1="588.2" y1="446.6" x2="597.5" y2="446.6" stroke="#d9a12a"/>
    <line x1="590.2" y1="448.5" x2="600" y2="448.5" stroke="#e0a52c"/>
    <line x1="589.5" y1="450.4" x2="596" y2="450.4" stroke="#d9a12a"/>
    <line x1="592" y1="452.3" x2="598" y2="452.3" stroke="#c97a22"/>
    <line x1="588.2" y1="454.1" x2="599" y2="454.1" stroke="#c98a26"/>
  </g>
  <use href="#pb" y="24"/>
  <!-- cursor -->
  <path d="M863.5 537.5 V554 L867 550.5 L869.5 556 L872 555 L869.6 549.5 L874.3 549.3z" fill="#000" stroke="#fff" stroke-width="1"/>
</svg>
<div class="abs" style="left:0;top:556px;width:1280px;height:4px;background:#0b0a0d"></div>
</body></html>
